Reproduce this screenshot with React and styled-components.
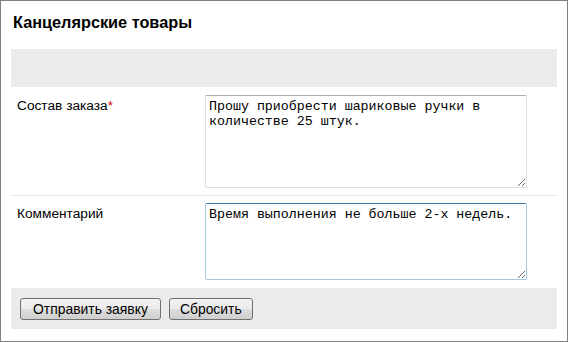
import React from "react"
import styled, { createGlobalStyle } from "styled-components"

const GlobalStyle = createGlobalStyle`
  html, body {
    margin: 0;
    padding: 0;
    background: #fff;
  }
  body {
    font-family: "Liberation Sans", Arial, sans-serif;
  }
`

const Panel = styled.div`
  box-sizing: border-box;
  width: 568px;
  height: 342px;
  border: 1px solid #808080;
  background: #fff;
`

const Title = styled.h1`
  margin: 0 0 12px;
  padding: 12px 12px 0;
  height: 36px;
  box-sizing: border-box;
  font-size: 16.3px;
  line-height: 18px;
  font-weight: bold;
  color: #000;
`

const Bar = styled.div`
  margin: 0 10px;
  height: ${p => p.$height}px;
  background: #ebebeb;
  box-sizing: border-box;
  padding: ${p => p.$padding || "0"};
  display: flex;
  align-items: flex-start;
  gap: 8px;
`

const Form = styled.form`
  margin: 0;
`

const Row = styled.div`
  display: grid;
  grid-template-columns: 188px 322px;
  margin: 0 10px;
  padding: ${p => (p.$first ? "8px 0 7px 6px" : "7px 0 8px 6px")};
  border-bottom: ${p => (p.$first ? "1px solid #ececec" : "none")};
`

const Label = styled.label`
  margin-top: 3px;
  font-size: 13.7px;
  line-height: 15px;
  color: #000;
`

const Required = styled.span`
  color: #e00000;
`

const TextArea = styled.textarea`
  box-sizing: border-box;
  width: 322px;
  height: ${p => p.$height}px;
  margin: 0;
  padding: 3px 3px;
  font-family: "Liberation Mono", "Courier New", monospace;
  font-size: 13.3px;
  line-height: 15px;
  color: #000;
  background: #fff;
  border: 1px solid ${p => (p.$focused ? "#a4c9e3" : "#dbdfe6")};
  border-top-color: ${p => (p.$focused ? "#3d7bad" : "#abadb3")};
  border-radius: 2px;
  outline: none;
  resize: both;
`

const Button = styled.button`
  box-sizing: border-box;
  height: 22px;
  padding: 0 ${p => p.$pad}px;
  font-family: "Liberation Sans", Arial, sans-serif;
  font-size: 13.9px;
  color: #000;
  border: 1px solid #707070;
  border-radius: 3px;
  background: linear-gradient(#f2f2f2 0%, #ebebeb 50%, #dddddd 51%, #cfcfcf 100%);
  cursor: pointer;
`

export default function App() {
  return (
    <>
      <GlobalStyle />
      <Panel>
        <Title>Канцелярские товары</Title>
        <Bar $height={38} />
        <Form onSubmit={e => e.preventDefault()}>
          <Row $first>
            <Label htmlFor="order">
              Состав заказа<Required>*</Required>
            </Label>
            <TextArea
              id="order"
              $height={93}
              defaultValue="Прошу приобрести шариковые ручки в количестве 25 штук."
            />
          </Row>
          <Row>
            <Label htmlFor="comment">Комментарий</Label>
            <TextArea
              id="comment"
              $height={77}
              $focused
              defaultValue="Время выполнения не больше 2-х недель."
            />
          </Row>
          <Bar $height={41} $padding="10px 9px">
            <Button type="submit" $pad={12}>Отправить заявку</Button>
            <Button type="reset" $pad={10}>Сбросить</Button>
          </Bar>
        </Form>
      </Panel>
    </>
  )
}
